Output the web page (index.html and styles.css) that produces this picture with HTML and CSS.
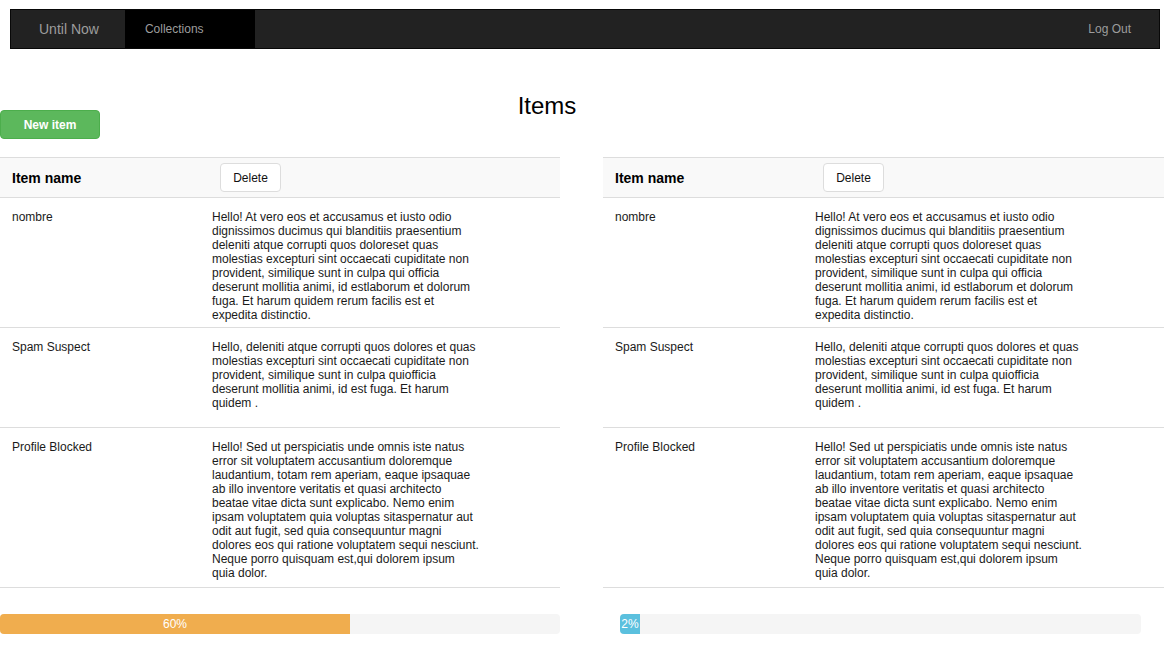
FILE: index.html
```html
<!DOCTYPE html>
<html lang="en">
<head>
<meta charset="utf-8">
<title>Items</title>
<link rel="stylesheet" href="styles.css">
</head>
<body>
<nav class="navbar">
  <div class="nav-left">
    <a class="brand" href="#">Until Now</a>
    <a class="nav-link active" href="#">Collections</a>
  </div>
  <a class="nav-link logout" href="#">Log Out</a>
</nav>

<header class="page-head">
  <h1 class="title">Items</h1>
  <button class="btn-new">New item</button>
</header>

<main class="panels">
  <section class="panel">
    <div class="item-table">
      <div class="head-row">
        <div class="col-name">Item name</div>
        <div class="col-desc"><button class="btn-delete">Delete</button></div>
      </div>
      <div class="item-row">
        <div class="col-name">nombre</div>
        <div class="col-desc">Hello! At vero eos et accusamus et iusto odio dignissimos ducimus qui blanditiis praesentium deleniti atque corrupti quos doloreset quas molestias excepturi sint occaecati cupiditate non provident, similique sunt in culpa qui officia deserunt mollitia animi, id estlaborum et dolorum fuga. Et harum quidem rerum facilis est et expedita distinctio.</div>
      </div>
      <div class="item-row row-short">
        <div class="col-name">Spam Suspect</div>
        <div class="col-desc">Hello, deleniti atque corrupti quos dolores et quas molestias excepturi sint occaecati cupiditate non provident, similique sunt in culpa quiofficia deserunt mollitia animi, id est fuga. Et harum quidem .</div>
      </div>
      <div class="item-row row-long">
        <div class="col-name">Profile Blocked</div>
        <div class="col-desc">Hello! Sed ut perspiciatis unde omnis iste natus error sit voluptatem accusantium doloremque laudantium, totam rem aperiam, eaque ipsaquae ab illo inventore veritatis et quasi architecto beatae vitae dicta sunt explicabo. Nemo enim ipsam voluptatem quia voluptas sitaspernatur aut odit aut fugit, sed quia consequuntur magni dolores eos qui ratione voluptatem sequi nesciunt. Neque porro quisquam est,qui dolorem ipsum quia dolor.</div>
      </div>
    </div>
    <div class="progress">
      <div class="progress-bar bar-warning" style="width: 62.5%">60%</div>
    </div>
  </section>

  <section class="panel">
    <div class="item-table">
      <div class="head-row">
        <div class="col-name">Item name</div>
        <div class="col-desc"><button class="btn-delete">Delete</button></div>
      </div>
      <div class="item-row">
        <div class="col-name">nombre</div>
        <div class="col-desc">Hello! At vero eos et accusamus et iusto odio dignissimos ducimus qui blanditiis praesentium deleniti atque corrupti quos doloreset quas molestias excepturi sint occaecati cupiditate non provident, similique sunt in culpa qui officia deserunt mollitia animi, id estlaborum et dolorum fuga. Et harum quidem rerum facilis est et expedita distinctio.</div>
      </div>
      <div class="item-row row-short">
        <div class="col-name">Spam Suspect</div>
        <div class="col-desc">Hello, deleniti atque corrupti quos dolores et quas molestias excepturi sint occaecati cupiditate non provident, similique sunt in culpa quiofficia deserunt mollitia animi, id est fuga. Et harum quidem .</div>
      </div>
      <div class="item-row row-long">
        <div class="col-name">Profile Blocked</div>
        <div class="col-desc">Hello! Sed ut perspiciatis unde omnis iste natus error sit voluptatem accusantium doloremque laudantium, totam rem aperiam, eaque ipsaquae ab illo inventore veritatis et quasi architecto beatae vitae dicta sunt explicabo. Nemo enim ipsam voluptatem quia voluptas sitaspernatur aut odit aut fugit, sed quia consequuntur magni dolores eos qui ratione voluptatem sequi nesciunt. Neque porro quisquam est,qui dolorem ipsum quia dolor.</div>
      </div>
    </div>
    <div class="progress progress-inset">
      <div class="progress-bar bar-info" style="width: 2%">2%</div>
    </div>
  </section>
</main>
</body>
</html>
```

FILE: styles.css
```css
* { box-sizing: border-box; }

html, body {
  margin: 0;
  padding: 0;
  background: #fff;
  color: #1a1a1a;
  font-family: "Liberation Sans", Arial, sans-serif;
  font-size: 12px;
}

a { text-decoration: none; }

.navbar {
  display: flex;
  justify-content: space-between;
  align-items: stretch;
  height: 40px;
  margin: 9px 8px 0 10px;
  background: #222;
  border: 1px solid #080808;
}

.nav-left {
  display: flex;
  align-items: stretch;
}

.brand {
  display: flex;
  align-items: center;
  padding: 0 26px 0 28px;
  color: #9d9d9d;
  font-size: 14px;
}

.nav-link {
  display: flex;
  align-items: center;
  padding: 0 20px;
  color: #9d9d9d;
  font-size: 12px;
}

.nav-link.active {
  background: #000;
  width: 130px;
}

.logout {
  padding-right: 28px;
}

.page-head {
  display: grid;
  margin-top: 44px;
  height: 46px;
}

.title {
  grid-area: 1 / 1;
  margin: 0;
  padding-right: 74px;
  text-align: center;
  font-size: 24px;
  font-weight: normal;
  line-height: 25px;
  color: #000;
}

.btn-new {
  grid-area: 1 / 1;
  align-self: end;
  justify-self: start;
  width: 100px;
  height: 29px;
  border: 1px solid #4cae4c;
  border-radius: 4px;
  background: #5cb85c;
  color: #fff;
  font-family: inherit;
  font-size: 12px;
  font-weight: bold;
  padding: 0;
}

.panels {
  display: grid;
  grid-template-columns: 560px 561px;
  column-gap: 43px;
  margin-top: 18px;
}

.item-table {
  border-top: 1px solid #ddd;
}

.head-row,
.item-row {
  display: grid;
  grid-template-columns: 200px 360px;
  border-bottom: 1px solid #ddd;
}

.head-row {
  height: 40px;
  align-items: center;
  background: #f9f9f9;
}

.head-row .col-name {
  font-size: 14px;
  font-weight: bold;
  color: #000;
}

.col-name {
  padding-left: 12px;
}

.col-desc {
  padding-left: 12px;
  padding-right: 80px;
}

.btn-delete {
  margin-left: 8px;
  width: 61px;
  height: 29px;
  padding: 0;
  background: #fff;
  border: 1px solid #ddd;
  border-radius: 4px;
  color: #111;
  font-family: inherit;
  font-size: 12px;
}

.item-row {
  line-height: 14px;
  padding: 12px 0 4px;
  min-height: 130px;
}

.item-row.row-short {
  min-height: 100px;
}

.item-row.row-long {
  padding-bottom: 7px;
  min-height: 160px;
}

.progress {
  height: 20px;
  margin-top: 26px;
  background: #f5f5f5;
  border-radius: 4px;
  overflow: hidden;
  display: flex;
}

.progress-inset {
  margin-left: 17px;
  margin-right: 23px;
}

.progress-bar {
  height: 100%;
  min-width: 20px;
  color: #fff;
  font-size: 12px;
  line-height: 20px;
  text-align: center;
}

.bar-warning { background: #f0ad4e; }
.bar-info { background: #5bc0de; }
```
